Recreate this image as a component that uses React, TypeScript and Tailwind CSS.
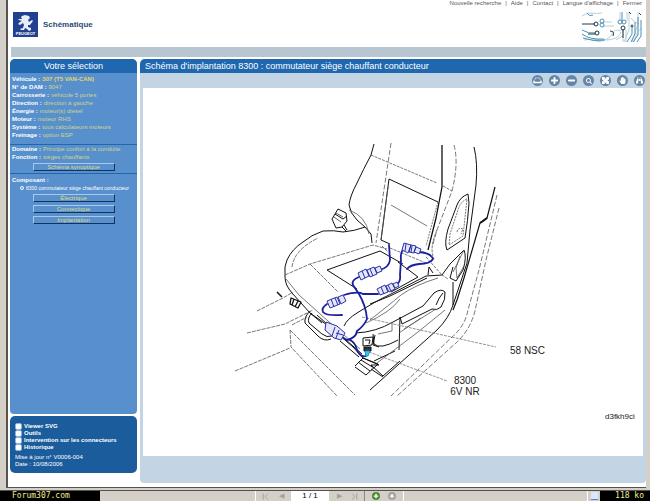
import React, { useState } from "react";
import {
  ChevronFirst,
  ChevronLast,
  Minus,
  Plus,
} from "lucide-react";
import { FaBinoculars, FaHandPaper, FaSearch } from "react-icons/fa";

type Field = {
  label: string;
  value: string;
};

const vehicle: Field[] = [
  { label: "Véhicule", value: "307 (T5 VAN-CAN)" },
  { label: "N° de DAM", value: "9047" },
  { label: "Carrosserie", value: "véhicule 5 portes" },
  { label: "Direction", value: "direction à gauche" },
  { label: "Énergie", value: "moteur(s) diesel" },
  { label: "Moteur", value: "moteur RHS" },
  { label: "Système", value: "tous calculateurs moteurs" },
  { label: "Freinage", value: "option ESP" },
];

const domain: Field[] = [
  { label: "Domaine", value: "Principe confort à la conduite" },
  { label: "Fonction", value: "sièges chauffants" },
];

const links = [
  "Nouvelle recherche",
  "Aide",
  "Contact",
  "Langue d'affichage",
  "Fermer",
];

const options = [
  "Viewer SVG",
  "Outils",
  "Intervention sur les connecteurs",
  "Historique",
];

const PrintIcon: React.FC = () => (
  <svg viewBox="0 0 9 9" className="h-[9px] w-[9px]" fill="none" stroke="white">
    <path d="M2 4V2H7V4" opacity="0.5" />
    <path d="M1 4.5V6.5H8V4.5" strokeWidth="1.4" />
  </svg>
);

const FitIcon: React.FC = () => (
  <svg viewBox="0 0 9 9" className="h-[9px] w-[9px]">
    <path
      d="M1 1H4L3.4 2.2H5.6L5 1H8V4L6.8 3.4V5.6L8 5V8H5L5.6 6.8H3.4L4 8H1V5L2.2 5.6V3.4L1 4Z"
      fill="white"
    />
  </svg>
);

const tools = [
  { name: "Imprimer", icon: <PrintIcon /> },
  { name: "Zoom avant", icon: <Plus size={9} strokeWidth={5} /> },
  { name: "Zoom arrière", icon: <Minus size={9} strokeWidth={5} /> },
  { name: "Loupe", icon: <FaSearch size={6} /> },
  { name: "Ajuster", icon: <FitIcon /> },
  { name: "Déplacer", icon: <FaHandPaper size={7} /> },
  { name: "Rechercher", icon: <FaBinoculars size={7} /> },
];

const FieldLines: React.FC<{ fields: Field[] }> = ({ fields }) => (
  <dl>
    {fields.map((field) => (
      <div key={field.label} className="flex gap-[2px] whitespace-nowrap">
        <dt className="font-bold text-white">{field.label} :</dt>
        <dd
          className={
            field.label === "Véhicule"
              ? "font-bold text-[#e2d66a]"
              : "text-[#cfd48a]"
          }
        >
          {field.value}
        </dd>
      </div>
    ))}
  </dl>
);

const SideButton: React.FC<{ children: React.ReactNode }> = ({ children }) => (
  <button className="mx-auto block h-2 w-[82px] border border-t-[#a9c8ec] border-r-[#12335f] border-b-[#12335f] border-l-[#a9c8ec] bg-[#5890ce] text-center text-[6px] leading-[6px] text-[#d8dc8c]">
    {children}
  </button>
);

const Lion: React.FC = () => (
  <svg viewBox="0 0 25 25" className="h-[25px] w-[25px] bg-[#20418f]">
    <path
      d="M9 4l3-1 4 1 1 2-2 2 1 2 3-2 1 1-3 4-2 0 0 2 3 1 0 2-2 1-2-2-2-1-1 2-3 0-1-1 3-1 1-3-1-2-3 2-2-1 2-2 2-1-3-1-1-1 4 0-1-2z"
      fill="#e8edf8"
    />
    <text
      x="12.5"
      y="23"
      textAnchor="middle"
      fontSize="4"
      fontWeight="bold"
      fill="white"
    >
      PEUGEOT
    </text>
  </svg>
);

const CircuitArt: React.FC = () => (
  <svg viewBox="0 0 60 30" className="h-[30px] w-[60px]" fill="none">
    <g stroke="#b9d0d8" strokeWidth="1">
      <path d="M0 4q6-4 10-3t10 0M14 30q14-2 16-8t9-3M24 28q12 0 15-8M38 0v8M45 0v9M21 10h9M21 14h11M41 18v12M44 18v12M47 0v18l-5 12M56 0v12l-6 18" />
      <path d="M52 30q3-12 8-14M49 6q3 5 8 6M2 28q12-2 18 1M34 28l8-5" />
    </g>
    <g stroke="#4b91b5" strokeWidth="1">
      <path d="M0 18q6 4 14 3M0 22q8 6 22 5M1 26q10 4 22 2M5 1q2 4 6 2M40 0v10M50 15v7l-5 8M53 10v12l-4 8M56 5v18l-5 7M59 8v16l-4 6" />
      <circle cx="20" cy="9" r="2" />
      <circle cx="20" cy="13" r="2" />
      <circle cx="38" cy="10" r="2" />
      <circle cx="42" cy="10" r="2" />
    </g>
    <g stroke="#253946" strokeWidth="1">
      <path d="M0 12h13M41 17v9M47 0l2 2M57 1l2 2M6 22h7M28 19q5 0 3 5" />
      <circle cx="14" cy="12" r="2" />
      <circle cx="15" cy="21" r="2" />
      <circle cx="41" cy="16" r="2" />
      <circle cx="50" cy="14" r="1" />
    </g>
  </svg>
);

const SeatDiagram: React.FC = () => (
  <svg
    viewBox="143 88 500 368"
    className="block w-full"
    fill="none"
    role="img"
    aria-label="Siège conducteur"
  >
    {/* garniture et structure */}
    <g stroke="#111" strokeWidth="1" strokeLinejoin="round">
      <path d="M374 144L371 155Q363 170 357 183Q350 196 349 205Q350 213 357 220L365 227L371 234L372 243" />
      <path d="M365 227Q355 231 343 232Q334 230 323 231Q311 235 303 242Q292 249 287 260L285 267L285 277Q285 285 292 293L310 313L330 327L353 347L363 358" />
      <path d="M389 179L438 202M389 179L381 240L390 244" />
      <path d="M442 145V187L436 218L428 250" strokeWidth="1.3" />
      <path d="M474 147Q478 163 476 185L470 230L467 263L453 305Q449 318 437 330L370 390" />
      <path d="M468 194Q460 197 457 205L448 229Q444 243 447 250L465 238Q468 220 469 203Z" />
      <path d="M495 187L487 218L480 223L464 278L457 300L453 310" strokeWidth="1.2" />
      <path d="M480 223L483 221L487 218" strokeWidth="2" />
      <path d="M398 262L418 277L391 292M327 270L380 251L403 264M327 270L357 289" />
      <path d="M344 326Q347 319 357 313Q376 301 389 295L426 276L442 275L450 264L464 250Q467 257 463 270L456 281L450 278L453 267" />
      <path d="M370 304L390 296L427 278M428 275L429 267L433 273" />
      <path d="M356 333Q376 332 393 322L423 306L434 293Q441 288 445 292Q446 299 441 307Q437 311 432 309L402 324L400 317L399 350" />
      <path d="M373 334L374 344Q380 350 398 340M436 305Q439 297 443 293M453 282V305" />
      <path d="M310 311Q304 317 305 323L318 336Q324 342 331 339M312 313Q307 318 309 323L322 334Q327 338 332 336M310 313L322 323M317 315L327 324" />
      <path d="M332 219L338 209L346 213L347 221L342 227L336 228ZM335 214L343 219L347 216M342 227L347 232M344 225L347 230" />
      <path d="M334 217L341 222M336 213L343 217" stroke="#666" />
      <path d="M277 292L282 297" strokeWidth="1.5" />
      <path d="M291 298L301 302L298 308L290 304ZM294 299L292 305M298 301L295 307" strokeWidth="1.3" />
      <path d="M340 341L359 357M345 339L362 354M363 358L379 365H371L383 376L400 361M355 366L363 358L378 364L366 375L355 367M358 362L370 371M361 360L374 368" />
      <path d="M383 377L371 369M374 361L395 351M375 335L373 345L379 347" />
    </g>

    {/* coutures et lignes fines */}
    <g stroke="#555" strokeWidth="0.8">
      <path d="M388 187L381 240M391 205L427 226M349 210Q366 216 369 234" />
      <path d="M371 155L437 183M443 186L452 191" strokeDasharray="3 1" />
      <path d="M391 143L376 243M454 145Q459 163 452 191L437 230L433 244" strokeDasharray="5 2" />
      <path d="M438 202L426 246M467 199Q460 202 458 210L450 234L449 245L463 236ZM457 232Q458 227 463 229L461 234" strokeDasharray="2 1" />
      <path d="M285 275L310 264L373 245L387 249M310 264L338 292M292 267Q294 250 318 238" strokeDasharray="4 1" />
      <path d="M497 195L479 270L468 310Q465 326 452 337L391 396" strokeDasharray="5 2" />
      <path d="M499 208L486 260L475 311Q470 330 457 342L397 396" strokeDasharray="5 2" />
      <path d="M382 246L388 252M390 248L426 263M426 257L442 275L448 279M437 230Q429 248 434 259" strokeDasharray="3 1" />
      <path d="M370 320Q389 305 401 295Q415 285 438 278M366 323Q391 312 400 299M378 334L392 331V322M404 329L436 309M399 333L421 318M445 310L418 332L377 363" />
      <path d="M460 256L456 268L457 278L464 266M464 250L453 272" />
      <path d="M286 279L299 295L328 321L360 349" />
      <path d="M257 311L283 298L293 292M247 333L285 324L313 310M292 325L307 317M235 371L290 348M290 330L291 347L337 396M290 330L355 395" strokeDasharray="4 1" />
    </g>

    {/* renvois */}
    <g stroke="#777" strokeWidth="0.8" strokeDasharray="3 1">
      <path d="M362 317L496 347" />
      <path d="M369 352L447 381" />
    </g>

    {/* faisceau */}
    <g stroke="#1a1f9e" strokeWidth="1.8" strokeLinecap="round">
      <path d="M389 245L390 260Q389 268 379 270" />
      <path d="M405 248Q400 251 401 260L400 275Q401 282 396 285" />
      <path d="M419 252Q431 253 433 259Q430 264 419 264Q410 265 407 269" />
      <path d="M359 277Q351 280 353 285L359 294Q366 306 367 319Q364 326 357 331Q356 338 347 340L342 337" />
      <path d="M344 295Q358 291 363 294H378" />
      <path d="M327 304Q321 308 323 312Q326 316 342 315" />
      <path d="M350 340Q355 342 357 350Q361 358 366 356L367 350" />
    </g>
    <g stroke="#2b30a8" strokeWidth="1" fill="#e4e6fa">
      <path d="M358 273L366 269L369 276L361 280ZM367 270L374 267L377 274L370 277ZM375 268L380 266L382 271L377 273ZM362 271L365 278M370 269L373 276" />
      <path d="M377 289L385 285L388 292L380 295ZM386 286L392 283L395 289L389 292ZM393 284L397 282L399 286L395 288ZM381 287L384 294M388 285L391 291" />
      <path d="M404 243L411 245L408 253L402 250ZM411 245L416 246L414 253L409 252ZM416 247L421 249L419 254L414 252ZM406 244L405 251M412 246L411 252" />
      <path d="M327 301L337 297L340 304L330 308ZM338 297L343 295L346 301L341 304ZM331 299L334 307M335 298L338 305" />
      <path d="M326 322L337 326L345 333L341 340L334 338L325 330ZM335 327L332 336M339 330L336 338M336 333L343 335" />
    </g>
    <path d="M363 338L373 337L372 345L363 346ZM365 340H370L369 344" stroke="#111" fill="white" />
    <path d="M364 347H371V351H364Z" stroke="#111" fill="#333" />
    <path d="M365 351H370L368 356H366Z" stroke="#159fd6" fill="#36c5f0" />

    <g fill="#222" fontSize="10">
      <text x="510" y="354">58 NSC</text>
      <text x="465" y="384" textAnchor="middle">8300</text>
      <text x="465" y="395" textAnchor="middle">6V NR</text>
      <text x="605" y="419" fontSize="8">d3fkh9ci</text>
    </g>
  </svg>
);

const Sidebar: React.FC = () => (
  <aside className="flex w-[127px] shrink-0 flex-col gap-[2px] text-[6px] leading-[8px]">
    <section className="flex grow flex-col overflow-hidden rounded-t-[5px] rounded-b-[4px] bg-[#5890ce]">
      <h2 className="bg-[#1f68b0] text-center text-[9px] leading-[14px] text-white">
        Votre sélection
      </h2>
      <div className="border-b border-[#1f68b0] px-[2px] pt-[2px] pb-[5px]">
        <FieldLines fields={vehicle} />
      </div>
      <div className="border-b border-[#1f68b0] px-[2px] pb-[2px]">
        <FieldLines fields={domain} />
        <div className="pt-[2px]">
          <SideButton>Schéma synoptique</SideButton>
        </div>
      </div>
      <div className="px-[2px] pt-[2px]">
        <h3 className="font-bold text-white">Composant :</h3>
        <label className="flex items-center gap-[2px] pl-2 text-[5px] whitespace-nowrap text-white">
          <input
            type="radio"
            name="component"
            defaultChecked
            className="h-1 w-1 appearance-none rounded-full border border-white"
          />
          8300 commutateur siège chauffant conducteur
        </label>
        <div className="flex flex-col gap-[3px] pt-[2px]">
          <SideButton>Électrique</SideButton>
          <SideButton>Connectique</SideButton>
          <SideButton>Implantation</SideButton>
        </div>
      </div>
    </section>

    <section className="rounded-[5px] bg-[#1b5c9c] px-[5px] pt-[7px] pb-[5px] text-white">
      {options.map((option) => (
        <label
          key={option}
          className="flex items-center gap-[2px] leading-[7px] font-bold whitespace-nowrap"
        >
          <input
            type="checkbox"
            className="h-[7px] w-[7px] appearance-none rounded-[2px] border border-[#8fb2dc] bg-white"
          />
          {option}
        </label>
      ))}
      <p className="pt-[3px] leading-[7px]">Mise à jour n° V0006-004</p>
      <p className="leading-[7px]">Date : 10/08/2006</p>
    </section>
  </aside>
);

const Viewer: React.FC = () => (
  <main className="min-w-0 grow overflow-hidden rounded-t-[5px] rounded-b-[4px] bg-[#c3d5e4]">
    <h1 className="bg-[#1f68b0] pl-[5px] text-[9px] leading-[14px] text-white">
      Schéma d'implantation 8300 : commutateur siège chauffant conducteur
    </h1>
    <div className="flex h-[15px] items-center justify-end gap-[6px] pr-px">
      {tools.map((tool) => (
        <button
          key={tool.name}
          aria-label={tool.name}
          className="flex h-[11px] w-[11px] items-center justify-center rounded-full bg-[#6485a6] text-white"
        >
          {tool.icon}
        </button>
      ))}
    </div>
    <div className="mr-[3px] mb-[27px] ml-[3px] bg-white">
      <SeatDiagram />
    </div>
  </main>
);

const StatusBar: React.FC = () => {
  const [page, setPage] = useState<string>("1 / 1");

  return (
    <footer className="flex h-[10px] bg-[#d4d0c8] text-[8px] leading-[10px]">
      <p className="w-[100px] bg-black pl-3 font-['DejaVu_Sans_Mono',monospace] text-[8px] text-[#f2ee8c]">
        Forum307.com
      </p>
      <div className="flex grow items-center">
        <div className="ml-[155px] flex h-full items-center gap-1 border-l border-white pl-1 text-[#a3a099]">
          <button aria-label="Première page">
            <ChevronFirst size={11} />
          </button>
          <button aria-label="Page précédente" className="w-3 text-[7px]">
            ◀
          </button>
          <input
            aria-label="Page"
            value={page}
            onChange={(e) => setPage(e.target.value)}
            className="h-[10px] w-[38px] bg-white text-center text-black"
          />
          <button aria-label="Page suivante" className="w-3 text-[7px]">
            ▶
          </button>
          <button aria-label="Dernière page">
            <ChevronLast size={11} />
          </button>
        </div>
        <div className="ml-1 flex h-full items-center gap-2 border-r border-l border-[#8b8880] border-r-white px-[7px] text-white">
          <button
            aria-label="Vue précédente"
            className="flex h-2 w-2 items-center justify-center rounded-full bg-[#4f8b35]"
          >
            <Plus size={6} strokeWidth={5} />
          </button>
          <button
            aria-label="Vue suivante"
            className="flex h-2 w-2 items-center justify-center rounded-full bg-[#a3a099]"
          >
            <Plus size={6} strokeWidth={5} />
          </button>
        </div>
      </div>
      <div className="flex w-[13px] items-center justify-center border-l border-white">
        <span className="h-2 w-[7px] border-b border-[#5c86c6] bg-[#dbe8fa]" />
      </div>
      <p className="w-[50px] bg-black pr-[6px] text-right font-['DejaVu_Sans_Mono',monospace] text-[8px] text-[#f2ee8c]">
        118 ko
      </p>
    </footer>
  );
};

const App: React.FC = () => {
  return (
    <div className="flex min-h-screen flex-col bg-[#d4d0c8] font-['Liberation_Sans',sans-serif]">
      <div className="mr-1 ml-[6px] flex grow flex-col border-b border-l-2 border-[#55534f] border-l-[#55534f] bg-white pb-[3px]">
        <header className="flex h-[47px] justify-between pl-[5px]">
          <div className="flex items-center gap-[5px] pt-[2px]">
            <Lion />
            <p className="text-[8px] font-bold text-[#2c4a74]">Schématique</p>
          </div>
          <div className="flex flex-col items-end gap-[5px] pr-1">
            <nav className="flex h-[7px] items-end text-[6px] leading-[7px] text-[#555]">
              {links.map((link, index) => (
                <span key={link}>
                  {index > 0 && <span className="px-1">|</span>}
                  <a href="#">{link}</a>
                </span>
              ))}
            </nav>
            <CircuitArt />
          </div>
        </header>
        <div className="ml-[3px] h-[10px] bg-[#b8c6d2]" />
        <div className="flex grow items-start gap-[3px] pt-[2px] pl-[2px]">
          <div className="flex self-stretch pb-[11px]">
            <Sidebar />
          </div>
          <Viewer />
        </div>
      </div>
      <div className="mt-[2px] h-px bg-[#55534f]" />
      <StatusBar />
    </div>
  );
};

export default App;
